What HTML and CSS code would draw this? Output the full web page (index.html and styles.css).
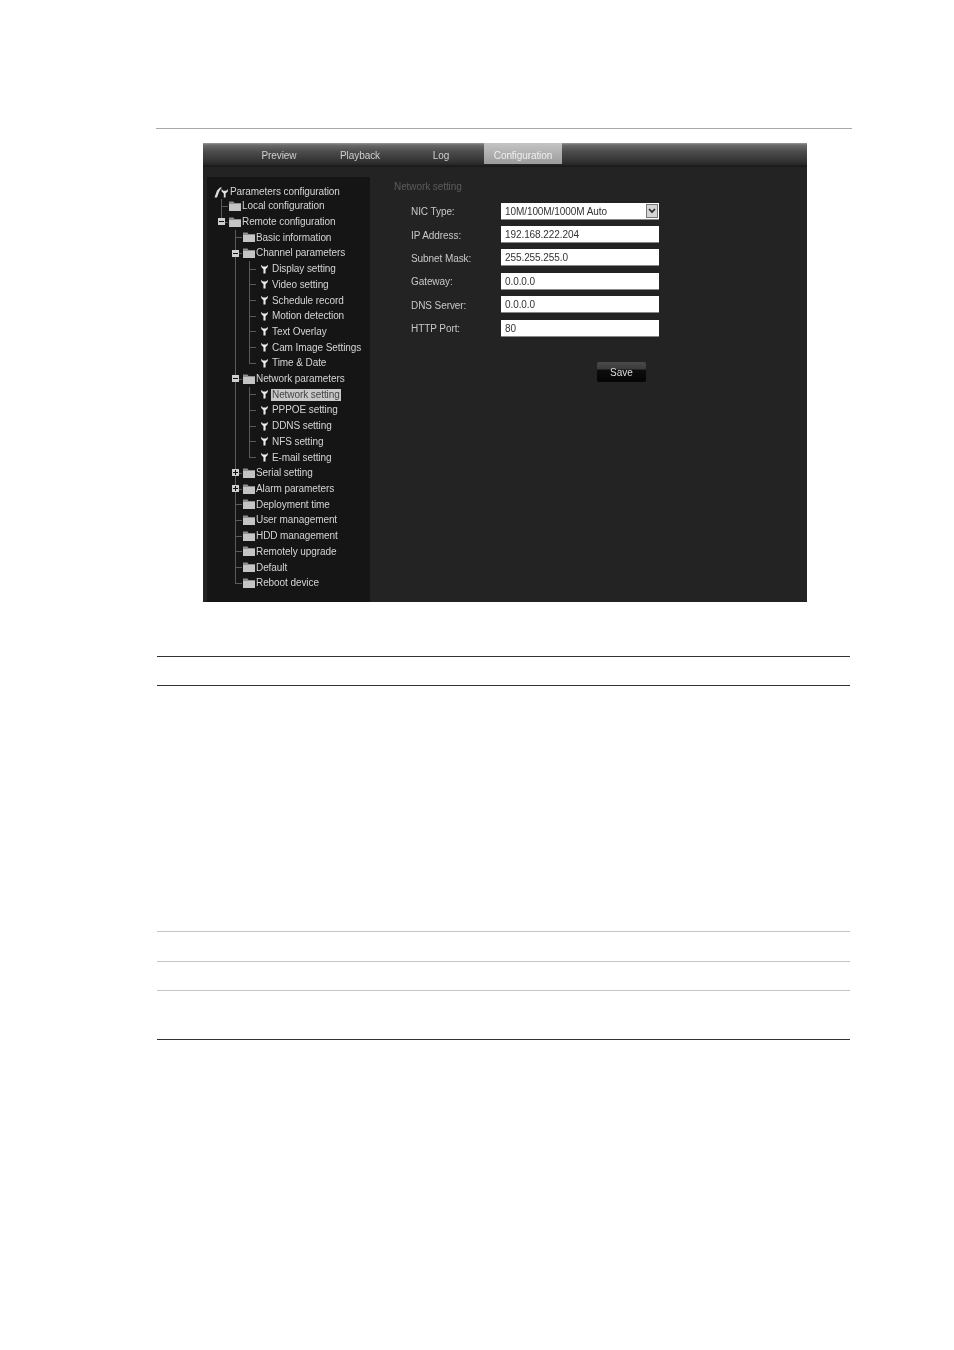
FILE: index.html
```html
<!DOCTYPE html>
<html>
<head>
    <meta name="viewport" content="width=device-width, initial-scale=1.0">
    <title>Network setting</title>
    <link rel="stylesheet" href="styles.css">
</head>
<body>
    <svg class="defs" width="0" height="0">
        <symbol id="folder" viewBox="0 0 12 10">
            <path d="M0 .5h4.5l1 1.5H12v1H0z" fill="#8e8e8e"/>
            <path d="M0 3h12v7H0z" fill="#c4c4c4"/>
        </symbol>
        <symbol id="tool" viewBox="0 0 8 10">
            <path d="M.3 0v2.8L2.8 5.2V10h2.4V5.2l2.5-2.4V0L5.9 2.2H2.1z" fill="#ececec"/>
        </symbol>
    </svg>

    <div class="page">
        <div class="top-rule"></div>

        <div class="shot">
            <div class="tabs">
                <span class="tab">Preview</span>
                <span class="tab">Playback</span>
                <span class="tab tab-log">Log</span>
                <span class="tab tab-active">Configuration</span>
            </div>
            <div class="panels">
                <div class="tree">
                    <div class="row root">
                        <svg class="root-icon" viewBox="0 0 14 12"><path d="M.5 11.5 3 4.5 6 1.5h2L6 4l-1 2-2 5.5z" fill="#dedede"/><path d="M7.6 3v2.4L9.8 7.6v4h1.8v-4l2.2-2.2V3l-1.6 1.8H9.2z" fill="#e2e2e2"/></svg>
                        <span class="label">Parameters configuration</span>
                    </div>
                    <div class="row"><i class="g tee"></i><svg class="folder"><use href="#folder"/></svg><span class="label">Local configuration</span></div>
                    <div class="row"><i class="g end"><b class="box minus"></b></i><svg class="folder"><use href="#folder"/></svg><span class="label">Remote configuration</span></div>

                    <div class="row"><i class="g none"></i><i class="g tee"></i><svg class="folder"><use href="#folder"/></svg><span class="label">Basic information</span></div>
                    <div class="row"><i class="g none"></i><i class="g tee"><b class="box minus"></b></i><svg class="folder"><use href="#folder"/></svg><span class="label">Channel parameters</span></div>

                    <div class="row"><i class="g none"></i><i class="g bar"></i><i class="g wide tee"></i><svg class="tool"><use href="#tool"/></svg><span class="label leaf">Display setting</span></div>
                    <div class="row"><i class="g none"></i><i class="g bar"></i><i class="g wide tee"></i><svg class="tool"><use href="#tool"/></svg><span class="label leaf">Video setting</span></div>
                    <div class="row"><i class="g none"></i><i class="g bar"></i><i class="g wide tee"></i><svg class="tool"><use href="#tool"/></svg><span class="label leaf">Schedule record</span></div>
                    <div class="row"><i class="g none"></i><i class="g bar"></i><i class="g wide tee"></i><svg class="tool"><use href="#tool"/></svg><span class="label leaf">Motion detection</span></div>
                    <div class="row"><i class="g none"></i><i class="g bar"></i><i class="g wide tee"></i><svg class="tool"><use href="#tool"/></svg><span class="label leaf">Text Overlay</span></div>
                    <div class="row"><i class="g none"></i><i class="g bar"></i><i class="g wide tee"></i><svg class="tool"><use href="#tool"/></svg><span class="label leaf">Cam Image Settings</span></div>
                    <div class="row"><i class="g none"></i><i class="g bar"></i><i class="g wide end"></i><svg class="tool"><use href="#tool"/></svg><span class="label leaf">Time &amp; Date</span></div>

                    <div class="row"><i class="g none"></i><i class="g tee"><b class="box minus"></b></i><svg class="folder"><use href="#folder"/></svg><span class="label">Network parameters</span></div>

                    <div class="row"><i class="g none"></i><i class="g bar"></i><i class="g wide tee"></i><svg class="tool"><use href="#tool"/></svg><span class="label leaf selected">Network setting</span></div>
                    <div class="row"><i class="g none"></i><i class="g bar"></i><i class="g wide tee"></i><svg class="tool"><use href="#tool"/></svg><span class="label leaf">PPPOE setting</span></div>
                    <div class="row"><i class="g none"></i><i class="g bar"></i><i class="g wide tee"></i><svg class="tool"><use href="#tool"/></svg><span class="label leaf">DDNS setting</span></div>
                    <div class="row"><i class="g none"></i><i class="g bar"></i><i class="g wide tee"></i><svg class="tool"><use href="#tool"/></svg><span class="label leaf">NFS setting</span></div>
                    <div class="row"><i class="g none"></i><i class="g bar"></i><i class="g wide end"></i><svg class="tool"><use href="#tool"/></svg><span class="label leaf">E-mail setting</span></div>

                    <div class="row"><i class="g none"></i><i class="g tee"><b class="box plus"></b></i><svg class="folder"><use href="#folder"/></svg><span class="label">Serial setting</span></div>
                    <div class="row"><i class="g none"></i><i class="g tee"><b class="box plus"></b></i><svg class="folder"><use href="#folder"/></svg><span class="label">Alarm parameters</span></div>
                    <div class="row"><i class="g none"></i><i class="g tee"></i><svg class="folder"><use href="#folder"/></svg><span class="label">Deployment time</span></div>
                    <div class="row"><i class="g none"></i><i class="g tee"></i><svg class="folder"><use href="#folder"/></svg><span class="label">User management</span></div>
                    <div class="row"><i class="g none"></i><i class="g tee"></i><svg class="folder"><use href="#folder"/></svg><span class="label">HDD management</span></div>
                    <div class="row"><i class="g none"></i><i class="g tee"></i><svg class="folder"><use href="#folder"/></svg><span class="label">Remotely upgrade</span></div>
                    <div class="row"><i class="g none"></i><i class="g tee"></i><svg class="folder"><use href="#folder"/></svg><span class="label">Default</span></div>
                    <div class="row"><i class="g none"></i><i class="g end"></i><svg class="folder"><use href="#folder"/></svg><span class="label">Reboot device</span></div>
                </div>

                <div class="content">
                    <div class="heading">Network setting</div>
                    <div class="form">
                        <label>NIC Type:</label>
                        <div class="field select">10M/100M/1000M Auto<span class="arrow"><svg viewBox="0 0 8 6" width="8" height="6"><path d="M1 1l3 3 3-3" fill="none" stroke="#222" stroke-width="1.6"/></svg></span></div>
                        <label>IP Address:</label>
                        <div class="field">192.168.222.204</div>
                        <label>Subnet Mask:</label>
                        <div class="field">255.255.255.0</div>
                        <label>Gateway:</label>
                        <div class="field">0.0.0.0</div>
                        <label>DNS Server:</label>
                        <div class="field">0.0.0.0</div>
                        <label>HTTP Port:</label>
                        <div class="field">80</div>
                    </div>
                    <button class="save-btn">Save</button>
                </div>
            </div>
        </div>

        <div class="table">
            <div class="table-row head"></div>
            <div class="table-row big"></div>
            <div class="table-row thin"></div>
            <div class="table-row thin"></div>
            <div class="table-row tall"></div>
        </div>
    </div>
</body>
</html>
```

FILE: styles.css
```css
* {
    box-sizing: border-box;
}
body {
    margin: 0;
    background: #fff;
    font-family: "Liberation Sans", Arial, sans-serif;
}
.defs {
    position: absolute;
}
.page {
    padding-top: 128px;
    height: 1350px;
}
.top-rule {
    margin: 0 102px 0 156px;
    border-top: 1px solid #a8a8a8;
}
.shot {
    width: 604px;
    height: 459px;
    margin: 14px 0 0 203px;
    background: #232323;
    filter: blur(0.45px);
    font-size: 10px;
    letter-spacing: -0.08px;
}
.tabs {
    display: flex;
    height: 24px;
    padding-left: 50px;
    background: linear-gradient(#9a9a9a 0, #6a6a6a 2px, #4e4e4e 8px, #2e2e2e 20px, #161616 24px);
}
.tab {
    color: #cfcfcf;
    line-height: 26px;
    text-align: center;
}
.tab:nth-child(1) {
    width: 52px;
}
.tab:nth-child(2) {
    width: 52px;
    margin-left: 29px;
}
.tab-log {
    width: 20px;
    margin-left: 45px;
}
.tab-active {
    width: 78px;
    margin-left: 33px;
    height: 21px;
    line-height: 26px;
    color: #f0f0f0;
    background: linear-gradient(#c4c4c4, #9c9c9c);
}
.panels {
    display: flex;
    height: 435px;
    padding-top: 10px;
}
.tree {
    width: 163px;
    margin-left: 4px;
    padding: 8px 0 0 7px;
    background: #151515;
}
.row {
    display: flex;
    align-items: center;
    height: 15.71px;
}
.root {
    height: 14px;
    margin-top: -0.5px;
}
.root-icon {
    width: 14px;
    height: 12px;
    margin: 0 1px 0 0;
}
.g {
    position: relative;
    display: block;
    flex: none;
    width: 14px;
    height: 100%;
    background-repeat: no-repeat;
}
.wide {
    width: 18px;
}
.tee {
    background-image: linear-gradient(#5a5a5a, #5a5a5a), linear-gradient(#5a5a5a, #5a5a5a);
    background-size: 1px 100%, 7px 1px;
    background-position: 7px 0, 7px 50%;
}
.end {
    background-image: linear-gradient(#5a5a5a, #5a5a5a), linear-gradient(#5a5a5a, #5a5a5a);
    background-size: 1px 50%, 7px 1px;
    background-position: 7px 0, 7px 50%;
}
.bar {
    background-image: linear-gradient(#5a5a5a, #5a5a5a);
    background-size: 1px 100%;
    background-position: 7px 0;
}
.box {
    position: absolute;
    left: 4px;
    top: 4px;
    width: 7px;
    height: 7px;
    background: #cfcfcf;
}
.box::before {
    content: "";
    position: absolute;
    left: 1px;
    top: 3px;
    width: 5px;
    height: 1px;
    background: #111;
}
.plus::after {
    content: "";
    position: absolute;
    left: 3px;
    top: 1px;
    width: 1px;
    height: 5px;
    background: #111;
}
.folder {
    flex: none;
    width: 12px;
    height: 10px;
    margin: 0 0 1px 1px;
}
.tool {
    flex: none;
    width: 7px;
    height: 10px;
    margin: 0 0 1px 1px;
}
.label {
    padding: 0 1px;
    color: #d4d4d4;
    white-space: nowrap;
    line-height: 12px;
}
.leaf {
    margin-left: 3px;
}
.selected {
    background: #c8c8c8;
    color: #444;
}
.content {
    position: relative;
    flex: 1;
}
.heading {
    margin: 3.5px 0 0 24px;
    color: #5c5c5c;
    line-height: 12px;
}
.form {
    display: grid;
    grid-template-columns: 90px 158px;
    grid-auto-rows: 23.4px;
    align-items: center;
    margin: 7px 0 0 41px;
}
.form label {
    padding-top: 1px;
    color: #c8c8c8;
}
.field {
    height: 17px;
    padding-left: 4px;
    line-height: 17px;
    color: #333;
    background: #fff;
    border: 1px solid #888;
    border-width: 0 0 1px 0;
}
.select {
    position: relative;
}
.arrow {
    position: absolute;
    right: 1px;
    top: 1px;
    display: flex;
    align-items: center;
    justify-content: center;
    width: 12px;
    height: 14px;
    background: #d4d4d4;
    border: 1px solid #777;
}
.save-btn {
    display: block;
    width: 49px;
    height: 20px;
    margin: 22px 0 0 227px;
    padding: 2px 0 0;
    border: none;
    border-radius: 2px;
    color: #dedede;
    font: 10px "Liberation Sans", Arial, sans-serif;
    background: linear-gradient(#4a4a4a 0, #3c3c3c 7px, #0d0d0d 8px, #050505 100%);
}
.table {
    margin: 54px 104px 0 157px;
}
.table-row {
    border-bottom: 1px solid #c4c4c4;
}
.head {
    height: 30px;
    border-top: 1px solid #333;
    border-bottom-color: #333;
}
.big {
    height: 246px;
}
.thin {
    height: 30px;
}
.thin + .thin {
    height: 29px;
}
.tall {
    height: 49px;
    border-bottom-color: #333;
}
```
